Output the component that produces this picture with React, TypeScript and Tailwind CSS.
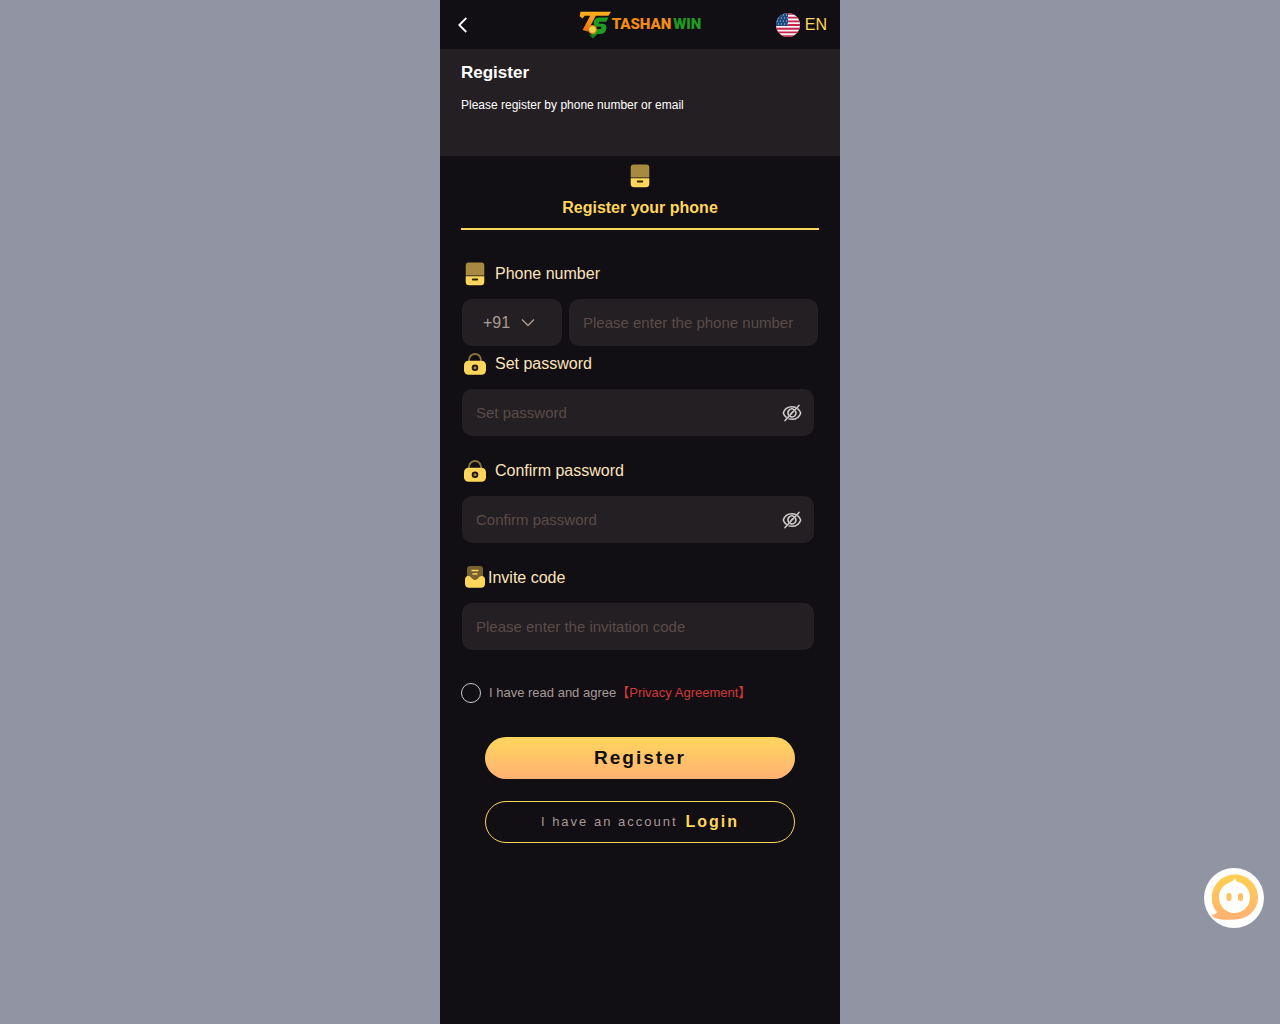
import { useState } from 'react';
import type { ReactNode } from 'react';

const inputClass =
  'min-w-0 flex-1 h-full bg-transparent outline-none text-[15px] text-white placeholder:text-[#5a4b49]';

function PhoneIcon() {
  return (
    <svg width="24" height="24" viewBox="0 0 24 24" className="shrink-0" aria-hidden="true">
      <path d="M2.700 13.400V3.500a3 3 0 0 1 3-3h12.600a3 3 0 0 1 3 3v9.900z" fill="#a68a41" />
      <path d="M2.700 14.300h18.600v5.400a3.500 3.500 0 0 1-3.500 3.500H6.200a3.500 3.500 0 0 1-3.500-3.500z" fill="#ffd65b" />
      <path d="M9.800 17.600h4.400" stroke="#2b2208" strokeWidth="2" strokeLinecap="round" />
    </svg>
  );
}

function LockIcon() {
  return (
    <svg width="24" height="24" viewBox="0 0 24 24" className="shrink-0" aria-hidden="true">
      <path d="M6 9.500V8a6 6 0 0 1 12 0v1.500" fill="none" stroke="#8b7439" strokeWidth="1.800" />
      <rect x="1" y="8.800" width="22" height="14" rx="4.500" fill="#ffd65b" />
      <circle cx="12" cy="15.800" r="3.300" fill="#1c1712" />
      <circle cx="12" cy="15.800" r="1.500" fill="#a68a41" />
    </svg>
  );
}

function InviteIcon() {
  return (
    <svg width="24" height="24" viewBox="0 0 24 24" className="shrink-0" aria-hidden="true">
      <path d="M4 13V3a3 3 0 0 1 3-3h10a3 3 0 0 1 3 3v10z" fill="#75622f" />
      <path
        d="M2 13.500c0-2 1.300-3.400 3.200-3.400 1.800 0 2.300.8 3.400 1.900 2 2 4.800 2 6.800 0 1.100-1.100 1.600-1.900 3.400-1.900 1.900 0 3.200 1.400 3.200 3.400v4.300c0 2.600-1.600 4-4 4H6c-2.400 0-4-1.400-4-4z"
        fill="#ffd65b"
      />
      <path d="M9 4.500h6M10 8h4" stroke="#ffd65b" strokeWidth="1.300" strokeLinecap="round" />
    </svg>
  );
}

function EyeOffIcon() {
  return (
    <svg width="20" height="20" viewBox="0 0 20 20" fill="none" stroke="#cfcdcd" strokeWidth="1.500" strokeLinecap="round" aria-hidden="true">
      <path d="M13.200 4.200C12.200 3.900 11.100 3.700 10 3.700 5.500 3.700 2.400 6.300 1.300 10c.5 1.700 1.500 3.100 2.900 4.200M7 15.900c1 .3 2 .4 3 .4 4.500 0 7.600-2.600 8.700-6.300-.5-1.700-1.500-3.100-2.900-4.200" />
      <path d="M12 6.600A3.900 3.900 0 0 0 6.600 12M8.300 13.500A3.900 3.900 0 0 0 13.500 8.200" />
      <path d="M10.600 8.700 8.700 11M17 2.400 3 17.600" />
    </svg>
  );
}

function UsFlag() {
  return (
    <svg width="24" height="24" viewBox="0 0 24 24" aria-hidden="true">
      <clipPath id="flag">
        <circle cx="12" cy="12" r="12" />
      </clipPath>
      <g clipPath="url(#flag)">
        <rect width="24" height="24" fill="#f5f2f5" />
        <path
          d="M0 .9h24M0 4.600h24M0 8.300h24M0 12h24M0 15.700h24M0 19.400h24M0 23.100h24"
          stroke="#c8234b"
          strokeWidth="1.850"
        />
        <rect width="12" height="12.900" fill="#1d4a80" />
        <path
          d="M2 5h10M1 8h11M2 11h10M4 2h8"
          stroke="#b9cde0"
          strokeWidth="1"
          strokeDasharray="1 2"
        />
      </g>
    </svg>
  );
}

function Logo() {
  return (
    <div className="flex items-center gap-px">
      <svg width="32" height="28" viewBox="0 0 32 28" aria-hidden="true">
        <defs>
          <linearGradient id="gold" x1="0" y1="0" x2="0" y2="1">
            <stop offset="0" stopColor="#ffb21e" />
            <stop offset="1" stopColor="#e8700f" />
          </linearGradient>
        </defs>
        <path d="M29.500 6.600H20.500c-3.600 0-5.300 1.700-5.800 4.700-.4 2.800 1 4.500 4 4.500h2.600c.8 0 1.100.4 1 1.100-.2.800-.7 1.200-1.500 1.200h-3L12 23.300l2.400 3.400L18.200 23h3.300c3.400 0 5.400-2 5.900-5.400.4-3.100-1-4.900-4-4.900h-2.700c-.8 0-1.100-.3-1-.9.100-.7.600-1 1.300-1h6.200z" fill="#1f9b20" />
        <path d="M1.500.8H32l-2.600 3.900H16.800L8.600 20.500 3.600 19 11.200 4.700H5.800L3.500 7.500.6 5.200z" fill="url(#gold)" />
        <circle cx="13.500" cy="18.500" r="4.500" fill="#d98a14" />
        <circle cx="13.500" cy="18.500" r="3.300" fill="#f7cf52" />
        <path d="M9.500 23.500 14 27.500l4-4-4 1z" fill="#117b1c" />
      </svg>
      <span className="font-['Roboto','Liberation_Sans',sans-serif] text-[15px] leading-none font-black whitespace-nowrap">
        <span className="text-[#f08c16]">TASHAN</span>
        <span className="ml-0.5 text-[#1f9b20]">WIN</span>
      </span>
    </div>
  );
}

function SupportIcon() {
  return (
    <svg width="60" height="60" viewBox="0 0 60 60" aria-hidden="true">
      <defs>
        <linearGradient id="bubble" x1="0" y1="0" x2="0" y2="1">
          <stop offset="0" stopColor="#ffd050" />
          <stop offset="1" stopColor="#ffb172" />
        </linearGradient>
      </defs>
      <circle cx="30" cy="30" r="30" fill="#fff" />
      <path
        d="M31 6.500C43.500 6.500 54 16.500 54 29.500 54 42 44 50.500 32 51.500c-8 .7-16 .5-21-1.500-1.800-.8-3-2-3.200-3.200 2.500.2 4.200-.8 5.200-2.800C9.500 40 7.800 36 7.800 30 7.800 17 18 6.500 31 6.500z"
        fill="url(#bubble)"
      />
      <path
        d="M31.500 10c-.3 1.900.6 3.300 2.500 4 7 1.600 12 7.600 12 15.200C46 38 39.300 45 30.500 45S15 38 15 29.200c0-6 3.500-11.400 8.500-13.700 3.300-1.400 6-3 8-5.500z"
        fill="#fff"
      />
      <rect x="22.500" y="25" width="5" height="8" rx="2.500" fill="#ffc064" />
      <rect x="34" y="25" width="5" height="8" rx="2.500" fill="#ffc064" />
    </svg>
  );
}

interface FieldProps {
  id: string;
  label: string;
  placeholder: string;
  icon: ReactNode;
  secret?: boolean;
  tight?: boolean;
}

function Field({ id, label, placeholder, icon, secret, tight }: FieldProps) {
  const [visible, setVisible] = useState(false);

  return (
    <div className="mr-1">
      <label
        htmlFor={id}
        className={`ml-px flex h-6 items-center text-base text-[#fde4bc] ${tight ? 'gap-px' : 'gap-2'}`}
      >
        {icon}
        {label}
      </label>
      <div className="mt-[13px] flex h-[47px] items-center rounded-[10px] bg-[#241f22] pr-3 pl-3.5">
        <input
          id={id}
          type={secret && !visible ? 'password' : 'text'}
          placeholder={placeholder}
          className={inputClass}
        />
        {secret && (
          <button type="button" aria-label="Toggle visibility" onClick={() => setVisible(!visible)}>
            <EyeOffIcon />
          </button>
        )}
      </div>
    </div>
  );
}

export default function App() {
  const [agreed, setAgreed] = useState(false);

  return (
    <div className="min-h-screen bg-[#9195a3] font-['Liberation_Sans',Arial,sans-serif]">
      <div className="mx-auto min-h-screen w-full max-w-[400px] bg-[#110e14]">
        {/* Header */}
        <header className="grid h-[49px] grid-cols-[1fr_auto_1fr] items-center px-[13px]">
          <button type="button" aria-label="Back" className="justify-self-start">
            <svg width="20" height="20" viewBox="0 0 20 20" fill="none" stroke="#fff" strokeWidth="1.800" aria-hidden="true">
              <path d="M13.300 3 6.300 10l7 7" />
            </svg>
          </button>
          <Logo />
          <button type="button" className="flex items-center gap-[5px] justify-self-end text-base text-[#ffd65b]">
            <UsFlag />
            EN
          </button>
        </header>

        {/* Banner */}
        <section className="h-[107px] bg-[#241f22] px-[21px] pt-3 text-white">
          <h1 className="text-[17px] leading-6 font-bold">Register</h1>
          <p className="mt-3 text-xs leading-4">Please register by phone number or email</p>
        </section>

        <main>
          {/* Tab */}
          <div className="mx-[21px] flex flex-col items-center border-b-2 border-[#ffd65b] pt-2 pb-2">
            <PhoneIcon />
            <h2 className="mt-2 text-base leading-6 font-bold text-[#ffd65b]">Register your phone</h2>
          </div>

          <form className="px-[22px] pt-8" onSubmit={(e) => e.preventDefault()}>
            <label htmlFor="phone" className="ml-px flex h-6 items-center gap-2 text-base text-[#fde4bc]">
              <PhoneIcon />
              Phone number
            </label>
            <div className="mt-[13px] mb-1.5 flex h-[47px] gap-[7px]">
              <div className="grid w-[100px] items-center rounded-[10px] bg-[#241f22]">
                <select
                  aria-label="Country code"
                  className="col-start-1 row-start-1 h-full w-full appearance-none bg-transparent pl-[21px] text-base text-[#a89a94] outline-none"
                >
                  <option>+91</option>
                </select>
                <svg
                  width="14"
                  height="14"
                  viewBox="0 0 14 14"
                  fill="none"
                  stroke="#a89a94"
                  strokeWidth="1.500"
                  className="pointer-events-none col-start-1 row-start-1 mr-[27px] justify-self-end"
                  aria-hidden="true"
                >
                  <path d="M1 3.500l6 6 6-6" />
                </svg>
              </div>
              <div className="flex min-w-0 flex-1 rounded-[10px] bg-[#241f22] px-3.5">
                <input id="phone" type="tel" placeholder="Please enter the phone number" className={inputClass} />
              </div>
            </div>

            <div className="flex flex-col gap-[23px]">
              <Field id="password" label="Set password" placeholder="Set password" icon={<LockIcon />} secret />
              <Field id="confirm" label="Confirm password" placeholder="Confirm password" icon={<LockIcon />} secret />
              <Field
                id="invite"
                label="Invite code"
                placeholder="Please enter the invitation code"
                icon={<InviteIcon />}
                tight
              />
            </div>

            {/* Agreement */}
            <div className="mt-[33px] -ml-px flex h-5 items-center text-[13px]">
              <input
                id="agree"
                type="checkbox"
                checked={agreed}
                onChange={(e) => setAgreed(e.target.checked)}
                className="size-5 shrink-0 appearance-none rounded-full border border-[#c8c9cc] checked:bg-[#ffd65b]"
              />
              <label htmlFor="agree" className="ml-2 text-[#a89a94]">
                I have read and agree
              </label>
              <a href="#privacy" className="font-['Liberation_Sans','Noto_Sans_CJK_SC',sans-serif] whitespace-nowrap text-[#d23838]">
                【Privacy Agreement】
              </a>
            </div>

            {/* Actions */}
            <div className="mt-[34px] flex flex-col gap-[22px] px-[23px]">
              <button
                type="submit"
                className="h-[42px] rounded-full bg-linear-to-b from-[#ffd65b] to-[#ffb172] text-[19px] font-bold tracking-[2px] text-[#110e14]"
              >
                Register
              </button>
              <button
                type="button"
                className="flex h-[42px] items-center justify-center gap-2 rounded-full border border-[#ffd65b] text-[13px] tracking-[2px] text-[#a89a94]"
              >
                I have an account
                <span className="text-base font-bold text-[#ffd65b]">Login</span>
              </button>
            </div>
          </form>
        </main>
      </div>

      {/* Customer service */}
      <button type="button" aria-label="Customer service" className="fixed right-4 bottom-24">
        <SupportIcon />
      </button>
    </div>
  );
}
